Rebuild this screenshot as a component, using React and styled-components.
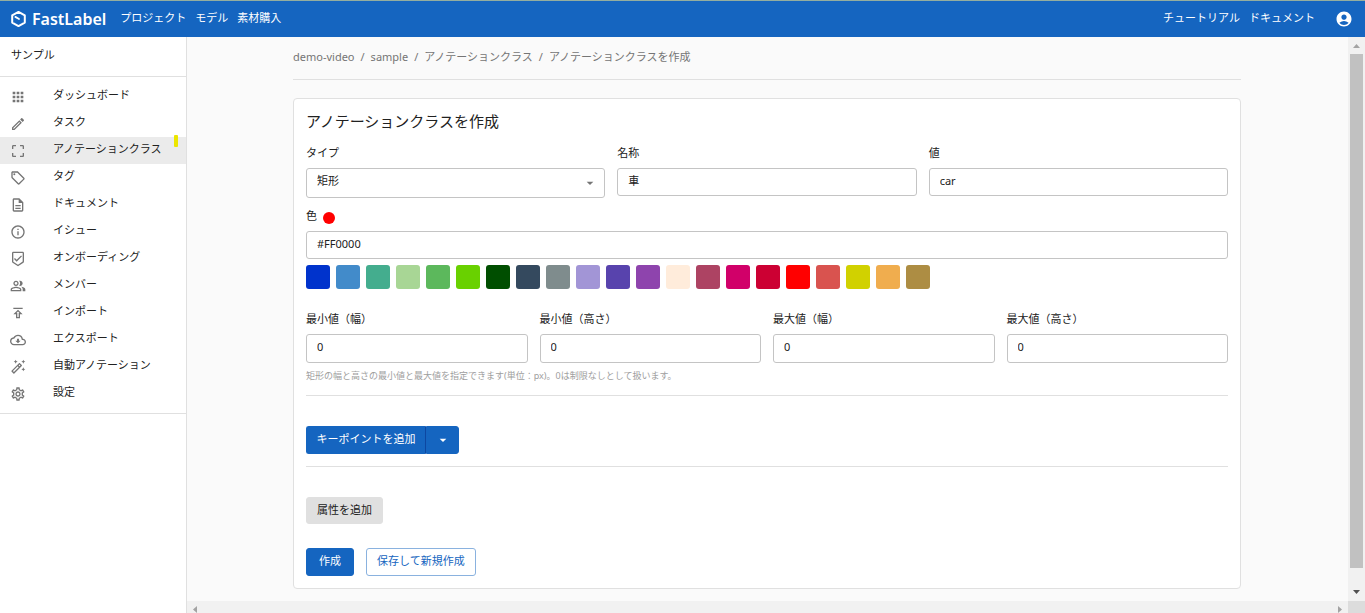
import React, { useState } from "react";
import styled, { createGlobalStyle } from "styled-components";
import {
  MdAccountCircle,
  MdApps,
  MdArrowDropDown,
  MdCropFree,
  MdInfoOutline,
  MdOutlineAutoFixHigh,
  MdOutlineBeenhere,
  MdOutlineCloudDownload,
  MdOutlineCreate,
  MdOutlineDescription,
  MdOutlineLocalOffer,
  MdOutlinePeopleAlt,
  MdOutlinePublish,
  MdOutlineSettings,
} from "react-icons/md";

const blue = "#1565c0";

const GlobalStyle = createGlobalStyle`
  *, *::before, *::after { box-sizing: border-box; }
  body {
    margin: 0;
    background: #fafafa;
    color: #212121;
    font-family: "Noto Sans", "Noto Sans CJK JP", sans-serif;
    font-size: 11px;
    line-height: 16px;
  }
  button, input, select { font: inherit; color: inherit; margin: 0; }
  a { color: inherit; text-decoration: none; }
`;

const Shell = styled.div`
  display: flex;
  flex-direction: column;
  min-height: 100vh;
`;

const Header = styled.header`
  display: flex;
  align-items: center;
  justify-content: space-between;
  height: 37px;
  padding: 0 12px 0 10px;
  border-top: 1px solid #94ae9f;
  background: ${blue};
  color: #fff;
`;

const HeaderGroup = styled.div`
  display: flex;
  align-items: center;
  gap: ${(p) => p.$gap}px;
`;

const Brand = styled.a`
  display: flex;
  align-items: center;
  gap: 5px;
  font-size: 16px;
  font-weight: 600;
  line-height: 20px;
`;

const HeaderNav = styled.nav`
  display: flex;
  gap: 9px;
  padding-bottom: 2px;
  white-space: nowrap;
`;

const AccountButton = styled.button`
  display: flex;
  padding: 0;
  border: 0;
  background: none;
  font-size: 18px;
`;

const Body = styled.div`
  display: flex;
  flex: 1;
`;

const Sidebar = styled.aside`
  flex: 0 0 187px;
  border-right: 1px solid #e0e0e0;
  background: #fff;
`;

const Workspace = styled.div`
  height: 40px;
  padding: 10px 11px;
  border-bottom: 1px solid #e0e0e0;
`;

const Menu = styled.ul`
  margin: 0;
  padding: 6px 0;
  border-bottom: 1px solid #e0e0e0;
  list-style: none;
`;

const MenuItem = styled.li`
  position: relative;
  background: ${(p) => (p.$active ? "#ebebeb" : "transparent")};
`;

const MenuLink = styled.a`
  display: flex;
  align-items: center;
  gap: 27px;
  height: 27px;
  padding-left: 10px;
  white-space: nowrap;

  svg { flex: none; font-size: 16px; color: #757575; }
  span { padding-bottom: 3px; }
`;

const Marker = styled.i`
  position: absolute;
  top: -2px;
  right: 8px;
  width: 4px;
  height: 12px;
  border-radius: 1px;
  background: #ece600;
`;

const Viewport = styled.div`
  display: grid;
  flex: 1;
  grid-template-columns: minmax(0, 1fr) 17px;
  grid-template-rows: 1fr 12px;
  min-width: 0;
`;

const Main = styled.main`
  padding: 12px 13px 12px 12px;
`;

const Container = styled.div`
  max-width: 948px;
  margin: 0 auto;
`;

const Breadcrumb = styled.nav`
  display: flex;
  gap: 6px;
  height: 31px;
  margin-bottom: 18px;
  border-bottom: 1px solid #e0e0e0;
  color: #757575;
  white-space: nowrap;
`;

const Card = styled.form`
  padding: 12px;
  border: 1px solid #e0e0e0;
  border-radius: 4px;
  background: #fff;
`;

const Title = styled.h1`
  margin: 0 0 14px;
  font-size: 15px;
  font-weight: 400;
  line-height: 20px;
`;

const FieldRow = styled.div`
  display: grid;
  grid-template-columns: repeat(${(p) => p.$columns}, minmax(0, 1fr));
  align-items: start;
  gap: 12px;
  margin-top: ${(p) => p.$top || 0}px;
`;

const Field = styled.div`
  display: flex;
  flex-direction: column;
  gap: 7px;
`;

const Label = styled.label`
  display: flex;
  align-items: center;
  gap: 6px;
`;

const Dot = styled.span`
  width: 12px;
  height: 12px;
  margin-top: 4px;
  border-radius: 50%;
  background: ${(p) => p.$color};
`;

const TextInput = styled.input`
  width: 100%;
  height: ${(p) => p.$height || 28}px;
  padding: 0 10px 4px;
  border: 1px solid #c4c4c4;
  border-radius: 3px;
  background: #fff;
`;

const SelectBox = styled.div`
  position: relative;

  svg {
    position: absolute;
    top: 7px;
    right: 7px;
    font-size: 16px;
    color: #757575;
    pointer-events: none;
  }
`;

const Select = styled.select`
  display: block;
  width: 100%;
  height: 30px;
  padding: 0 30px 4px 10px;
  border: 1px solid #c4c4c4;
  border-radius: 3px;
  background: #fff;
  appearance: none;
`;

const Swatches = styled.div`
  display: flex;
  flex-wrap: wrap;
  gap: 6px;
  margin-top: 6px;
`;

const Swatch = styled.button`
  width: 24px;
  height: 24px;
  padding: 0;
  border: 0;
  border-radius: 3px;
  background: ${(p) => p.$color};
`;

const Help = styled.p`
  margin: 6px 0 12px;
  font-size: 9px;
  line-height: 14px;
  color: #9e9e9e;
`;

const Divider = styled.hr`
  margin: 0 0 30px;
  border: 0;
  border-top: 1px solid #e0e0e0;
`;

const variants = {
  primary: `background: ${blue}; border-color: ${blue}; color: #fff;`,
  outline: `background: #fff; border-color: #8ab2df; color: ${blue};`,
  neutral: `background: #e0e0e0; border-color: #e0e0e0;`,
};

const Button = styled.button`
  display: inline-flex;
  align-items: center;
  justify-content: center;
  min-width: ${(p) => p.$minWidth || 0}px;
  height: ${(p) => p.$height || 28}px;
  padding: 0 10px 2px;
  border: 1px solid;
  border-radius: 3px;
  white-space: nowrap;
  ${(p) => variants[p.$variant]}
`;

const SplitButton = styled.div`
  display: flex;
  margin-bottom: 12px;

  button:first-child {
    min-width: 120px;
    padding: 0 9px 2px;
    border-right-color: #0d47a1;
    border-radius: 3px 0 0 3px;
  }
  button:last-child {
    width: 33px;
    padding: 0;
    border-radius: 0 3px 3px 0;
    font-size: 16px;
  }
`;

const Actions = styled.div`
  display: flex;
  gap: 12px;
  margin-top: 24px;
`;

const VerticalBar = styled.div`
  display: flex;
  flex-direction: column;
  align-items: center;
  justify-content: space-between;
  padding: 7px 2px;
  background: #f1f1f1;
`;

const Thumb = styled.div`
  flex: 1;
  width: 13px;
  margin: 6px 0 22px;
  background: #c1c1c1;
`;

const HorizontalBar = styled.div`
  display: flex;
  align-items: flex-end;
  justify-content: space-between;
  padding: 0 6px;
  background: #f1f1f1;
`;

const Corner = styled.div`
  background: #dcdcdc;
`;

const ArrowSvg = styled.svg`
  display: block;
  flex: none;
  fill: ${(p) => p.$color};
`;

const arrowShapes = {
  up: { width: 7, height: 4, points: "0,4 3.5,0 7,4" },
  down: { width: 7, height: 4, points: "0,0 3.5,4 7,0" },
  left: { width: 4, height: 7, points: "4,0 0,3.5 4,7" },
  right: { width: 4, height: 7, points: "0,0 4,3.5 0,7" },
};

function Arrow({ dir, color }) {
  const { width, height, points } = arrowShapes[dir];
  return (
    <ArrowSvg $color={color} width={width} height={height} viewBox={`0 0 ${width} ${height}`}>
      <polygon points={points} />
    </ArrowSvg>
  );
}

function Logo() {
  return (
    <svg width="17" height="18" viewBox="0 0 17 18" fill="none" stroke="#fff" strokeWidth="2" strokeLinejoin="round" strokeLinecap="round" aria-hidden="true">
      <path d="M8.5 1.9 L14.8 5.4 V12.6 L8.5 16.1 L2.2 12.6 V5.4 Z" />
      <path d="M5.4 6.9 L9 9" strokeWidth="1.8" />
    </svg>
  );
}

const menu = [
  ["ダッシュボード", MdApps],
  ["タスク", MdOutlineCreate],
  ["アノテーションクラス", MdCropFree],
  ["タグ", MdOutlineLocalOffer],
  ["ドキュメント", MdOutlineDescription],
  ["イシュー", MdInfoOutline],
  ["オンボーディング", MdOutlineBeenhere],
  ["メンバー", MdOutlinePeopleAlt],
  ["インポート", MdOutlinePublish],
  ["エクスポート", MdOutlineCloudDownload],
  ["自動アノテーション", MdOutlineAutoFixHigh],
  ["設定", MdOutlineSettings],
];

const palette = [
  "#0033cc", "#428bca", "#44ad8e", "#a8d695", "#5cb85c", "#69d100", "#004e00",
  "#34495e", "#7f8c8d", "#a295d6", "#5843ad", "#8e44ad", "#ffecdb", "#ad4363",
  "#d10069", "#cc0033", "#ff0000", "#d9534f", "#d1d100", "#f0ad4e", "#ad8d43",
];

const limits = [
  ["min-width", "最小値（幅）"],
  ["min-height", "最小値（高さ）"],
  ["max-width", "最大値（幅）"],
  ["max-height", "最大値（高さ）"],
];

export default function App() {
  const [color, setColor] = useState("#FF0000");

  return (
    <>
      <GlobalStyle />
      <Shell lang="ja">
        <Header>
          <HeaderGroup $gap={14}>
            <Brand href="#">
              <Logo />
              FastLabel
            </Brand>
            <HeaderNav>
              <a href="#">プロジェクト</a>
              <a href="#">モデル</a>
              <a href="#">素材購入</a>
            </HeaderNav>
          </HeaderGroup>
          <HeaderGroup $gap={20}>
            <HeaderNav>
              <a href="#">チュートリアル</a>
              <a href="#">ドキュメント</a>
            </HeaderNav>
            <AccountButton type="button" aria-label="アカウント">
              <MdAccountCircle color="#fff" />
            </AccountButton>
          </HeaderGroup>
        </Header>

        <Body>
          <Sidebar>
            <Workspace>サンプル</Workspace>
            <Menu>
              {menu.map(([text, Icon]) => {
                const active = text === "アノテーションクラス";
                return (
                  <MenuItem key={text} $active={active}>
                    <MenuLink href="#">
                      <Icon />
                      <span>{text}</span>
                    </MenuLink>
                    {active && <Marker />}
                  </MenuItem>
                );
              })}
            </Menu>
          </Sidebar>

          <Viewport>
            <Main>
              <Container>
                <Breadcrumb>
                  <a href="#">demo-video</a>
                  <span>/</span>
                  <a href="#">sample</a>
                  <span>/</span>
                  <a href="#">アノテーションクラス</a>
                  <span>/</span>
                  <span>アノテーションクラスを作成</span>
                </Breadcrumb>

                <Card>
                  <Title>アノテーションクラスを作成</Title>

                  <FieldRow $columns={3}>
                    <Field>
                      <Label htmlFor="type">タイプ</Label>
                      <SelectBox>
                        <Select id="type" defaultValue="矩形">
                          <option>矩形</option>
                        </Select>
                        <MdArrowDropDown />
                      </SelectBox>
                    </Field>
                    <Field>
                      <Label htmlFor="name">名称</Label>
                      <TextInput id="name" defaultValue="車" />
                    </Field>
                    <Field>
                      <Label htmlFor="value">値</Label>
                      <TextInput id="value" defaultValue="car" />
                    </Field>
                  </FieldRow>

                  <FieldRow $columns={1} $top={10}>
                    <Field>
                      <Label htmlFor="color">
                        色
                        <Dot $color={color} />
                      </Label>
                      <TextInput id="color" value={color} onChange={(e) => setColor(e.target.value)} />
                    </Field>
                  </FieldRow>
                  <Swatches>
                    {palette.map((c) => (
                      <Swatch key={c} type="button" $color={c} aria-label={c} onClick={() => setColor(c.toUpperCase())} />
                    ))}
                  </Swatches>

                  <FieldRow $columns={4} $top={22}>
                    {limits.map(([id, text]) => (
                      <Field key={id}>
                        <Label htmlFor={id}>{text}</Label>
                        <TextInput id={id} $height={29} defaultValue="0" />
                      </Field>
                    ))}
                  </FieldRow>
                  <Help>矩形の幅と高さの最小値と最大値を指定できます(単位：px)。0は制限なしとして扱います。</Help>

                  <Divider />
                  <SplitButton>
                    <Button type="button" $variant="primary">キーポイントを追加</Button>
                    <Button type="button" $variant="primary" aria-label="その他の追加方法">
                      <MdArrowDropDown />
                    </Button>
                  </SplitButton>
                  <Divider />

                  <Button type="button" $variant="neutral" $height={27}>属性を追加</Button>
                  <Actions>
                    <Button type="button" $variant="primary" $minWidth={48}>作成</Button>
                    <Button type="button" $variant="outline">保存して新規作成</Button>
                  </Actions>
                </Card>
              </Container>
            </Main>
            <VerticalBar aria-hidden="true">
              <Arrow dir="up" color="#a3a3a3" />
              <Thumb />
              <Arrow dir="down" color="#505050" />
            </VerticalBar>
            <HorizontalBar aria-hidden="true">
              <Arrow dir="left" color="#a3a3a3" />
              <Arrow dir="right" color="#a3a3a3" />
            </HorizontalBar>
            <Corner />
          </Viewport>
        </Body>
      </Shell>
    </>
  );
}
